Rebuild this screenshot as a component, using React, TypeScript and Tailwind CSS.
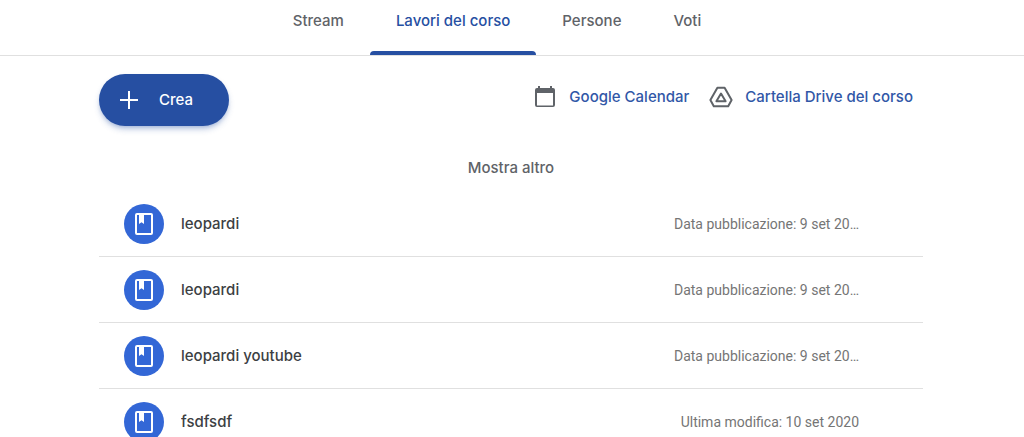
const tabs = [
  { label: "Stream", href: "#stream" },
  { label: "Lavori del corso", href: "#lavori", active: true },
  { label: "Persone", href: "#persone" },
  { label: "Voti", href: "#voti" },
];

const materials = [
  { id: 1, title: "leopardi", date: "Data pubblicazione: 9 set 20…" },
  { id: 2, title: "leopardi", date: "Data pubblicazione: 9 set 20…" },
  { id: 3, title: "leopardi youtube", date: "Data pubblicazione: 9 set 20…" },
  { id: 4, title: "fsdfsdf", date: "Ultima modifica: 10 set 2020" },
];

type Material = { id: number; title: string; date: string };

function PlusIcon() {
  return (
    <svg className="w-5 h-5 shrink-0" viewBox="0 0 20 20" fill="none" stroke="currentColor" strokeWidth={2} aria-hidden="true">
      <path d="M10 1v18M1 10h18" />
    </svg>
  );
}

function CalendarIcon() {
  return (
    <svg className="w-6 h-6 shrink-0 text-[#5f6368]" viewBox="0 0 24 24" fill="currentColor" aria-hidden="true">
      <path d="M20 3h-1V1h-2v2H7V1H5v2H4a2 2 0 0 0-2 2v15a2 2 0 0 0 2 2h16a2 2 0 0 0 2-2V5a2 2 0 0 0-2-2zm0 17.500H4V8h16v12.500z" />
    </svg>
  );
}

function DriveIcon() {
  return (
    <svg className="w-6 h-6 shrink-0 text-[#5f6368]" viewBox="0 0 24 24" fill="none" stroke="currentColor" strokeWidth={2} strokeLinejoin="round" aria-hidden="true">
      <path d="M8.400 2.700h7.200L22.600 15l-3.400 6.200H4.800L1.400 15z" />
      <path d="M12 8.500l4.600 7.800H7.400z" />
    </svg>
  );
}

function MaterialIcon() {
  return (
    <span className="flex items-center justify-center w-10 h-10 shrink-0 rounded-full bg-[#3367d6] text-white">
      <svg className="w-6 h-6" viewBox="0 0 24 24" fill="currentColor" aria-hidden="true">
        <path d="M19 1H5a2 2 0 0 0-2 2v18a2 2 0 0 0 2 2h14a2 2 0 0 0 2-2V3a2 2 0 0 0-2-2zm0 20H5V3h2v9l2.500-1.800L12 12V3h7v18z" />
      </svg>
    </span>
  );
}

function MaterialRow({ item }: { item: Material }) {
  return (
    <li className="flex items-center h-[66px] pl-[25px] pr-16 border-b border-[#e0e0e0]">
      <MaterialIcon />
      <span className="ml-[17px] flex-1 min-w-0 truncate text-[15px] leading-6 font-medium text-[#3c4043]">{item.title}</span>
      <span className="shrink-0 font-['Roboto',sans-serif] text-sm text-[#757575]">{item.date}</span>
    </li>
  );
}

export default function App() {
  return (
    <div className="bg-white font-['Inter',sans-serif]">
      <nav className="flex justify-center h-14 pr-[30px] border-b border-[#e0e0e0]">
        {tabs.map((tab) => (
          <a key={tab.label} href={tab.href} aria-current={tab.active ? "page" : undefined}
            className={`flex flex-col px-[26px] text-[15px] font-medium ${tab.active ? "text-[#264fa2]" : "text-[#5f6368]"}`}>
            <span className="flex flex-1 items-center pb-2">{tab.label}</span>
            <span className={`h-1 -mx-[26px] rounded-t ${tab.active ? "bg-[#264fa2]" : "bg-transparent"}`} />
          </a>
        ))}
      </nav>

      <div className="pr-0.5">
        <main className="w-full max-w-[824px] mx-auto pt-[18px]">
          <div className="flex items-start justify-between">
            <button type="button"
              className="flex items-center gap-5 h-[52px] pl-5 pr-9 rounded-full bg-[#264fa2] text-[15px] font-medium text-white shadow-md shadow-[#264fa2]/30">
              <PlusIcon />
              Crea
            </button>

            <div className="flex items-center gap-5 h-[46px] pr-2.5 text-[15px] font-medium text-[#3157a7]">
              <a href="#calendar" className="flex items-center gap-3">
                <CalendarIcon />
                Google Calendar
              </a>
              <a href="#drive" className="flex items-center gap-3">
                <DriveIcon />
                Cartella Drive del corso
              </a>
            </div>
          </div>

          <button type="button" className="block mx-auto mt-[26px] mb-[7px] px-2 py-1 text-[15px] leading-6 font-medium text-[#5f6368]">
            Mostra altro
          </button>

          <ul>
            {materials.map((item) => <MaterialRow key={item.id} item={item} />)}
          </ul>
        </main>
      </div>
    </div>
  );
}
